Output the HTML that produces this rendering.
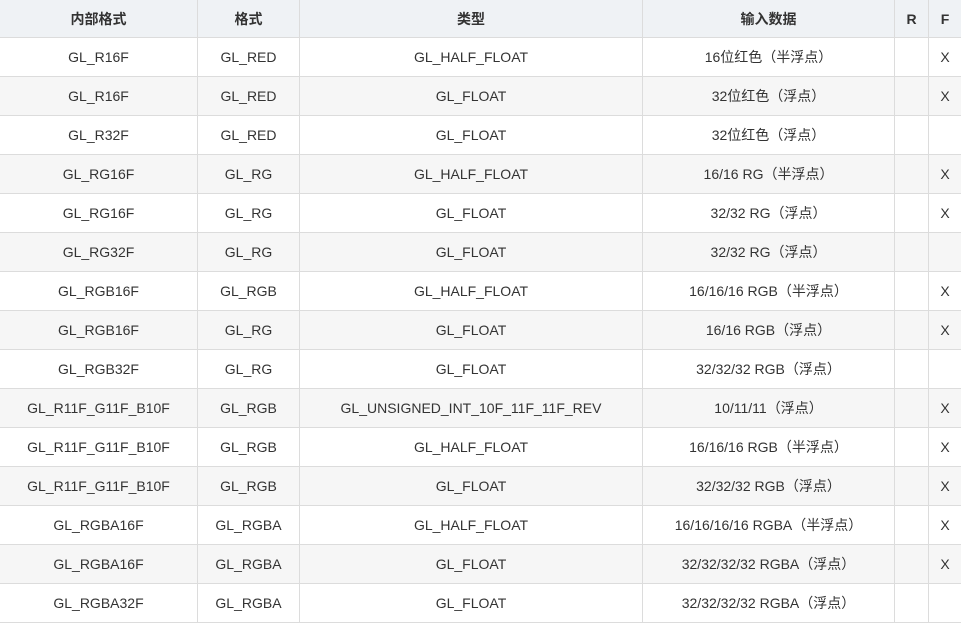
<!DOCTYPE html>
<html><head><meta charset="utf-8"><style>
html,body{margin:0;padding:0;background:#fff;}
table{border-collapse:collapse;table-layout:fixed;width:962px;margin-left:-1px;margin-top:-1px;font-family:"Liberation Sans","Noto Sans CJK SC",sans-serif;font-size:14px;color:#333;}
td,th{border:1px solid #dcdcdc;text-align:center;padding:0;height:38px;white-space:nowrap;overflow:hidden;}
th{background:#eff2f5;font-weight:bold;height:37px;}
tbody tr:nth-child(even) td{background:#f6f6f6;}
</style></head><body>
<table>
<colgroup><col style="width:198px"><col style="width:102px"><col style="width:343px"><col style="width:252px"><col style="width:34px"><col style="width:33px"></colgroup>
<thead><tr><th>内部格式</th><th>格式</th><th>类型</th><th>输入数据</th><th>R</th><th>F</th></tr></thead>
<tbody>
<tr><td>GL_R16F</td><td>GL_RED</td><td>GL_HALF_FLOAT</td><td>16位红色（半浮点）</td><td></td><td>X</td></tr>
<tr><td>GL_R16F</td><td>GL_RED</td><td>GL_FLOAT</td><td>32位红色（浮点）</td><td></td><td>X</td></tr>
<tr><td>GL_R32F</td><td>GL_RED</td><td>GL_FLOAT</td><td>32位红色（浮点）</td><td></td><td></td></tr>
<tr><td>GL_RG16F</td><td>GL_RG</td><td>GL_HALF_FLOAT</td><td>16/16 RG（半浮点）</td><td></td><td>X</td></tr>
<tr><td>GL_RG16F</td><td>GL_RG</td><td>GL_FLOAT</td><td>32/32 RG（浮点）</td><td></td><td>X</td></tr>
<tr><td>GL_RG32F</td><td>GL_RG</td><td>GL_FLOAT</td><td>32/32 RG（浮点）</td><td></td><td></td></tr>
<tr><td>GL_RGB16F</td><td>GL_RGB</td><td>GL_HALF_FLOAT</td><td>16/16/16 RGB（半浮点）</td><td></td><td>X</td></tr>
<tr><td>GL_RGB16F</td><td>GL_RG</td><td>GL_FLOAT</td><td>16/16 RGB（浮点）</td><td></td><td>X</td></tr>
<tr><td>GL_RGB32F</td><td>GL_RG</td><td>GL_FLOAT</td><td>32/32/32 RGB（浮点）</td><td></td><td></td></tr>
<tr><td>GL_R11F_G11F_B10F</td><td>GL_RGB</td><td>GL_UNSIGNED_INT_10F_11F_11F_REV</td><td>10/11/11（浮点）</td><td></td><td>X</td></tr>
<tr><td>GL_R11F_G11F_B10F</td><td>GL_RGB</td><td>GL_HALF_FLOAT</td><td>16/16/16 RGB（半浮点）</td><td></td><td>X</td></tr>
<tr><td>GL_R11F_G11F_B10F</td><td>GL_RGB</td><td>GL_FLOAT</td><td>32/32/32 RGB（浮点）</td><td></td><td>X</td></tr>
<tr><td>GL_RGBA16F</td><td>GL_RGBA</td><td>GL_HALF_FLOAT</td><td>16/16/16/16 RGBA（半浮点）</td><td></td><td>X</td></tr>
<tr><td>GL_RGBA16F</td><td>GL_RGBA</td><td>GL_FLOAT</td><td>32/32/32/32 RGBA（浮点）</td><td></td><td>X</td></tr>
<tr><td>GL_RGBA32F</td><td>GL_RGBA</td><td>GL_FLOAT</td><td>32/32/32/32 RGBA（浮点）</td><td></td><td></td></tr>
</tbody>
</table>
</body></html>
